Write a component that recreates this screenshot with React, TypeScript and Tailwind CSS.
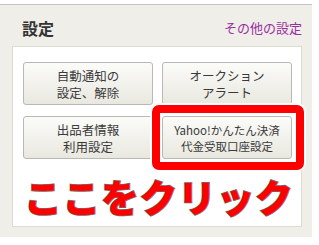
import React from "react";

const jp = { fontFamily: '"Noto Sans CJK JP", "Noto Sans", sans-serif' };

function Btn({ children, small }: { children: React.ReactNode; small?: boolean }) {
  return (
    <div
      className={`flex h-[43px] w-[130px] flex-col items-center justify-center rounded-[3px] border border-[#b9b9b3] bg-gradient-to-b from-[#fbfbf9] to-[#e9e8e0] text-[#3a3a3a] ${
        small ? "text-[11.5px] leading-[16px]" : "text-[12.5px] leading-[17px]"
      }`}
    >
      {children}
    </div>
  );
}

export default function App() {
  return (
    <div className="h-[245px] w-[319px] overflow-hidden bg-white pt-[4px]" style={jp}>
      <div className="h-px w-[312px] bg-[#c3c3c3]" />
      <div className="flex h-[232px] w-[312px] flex-col bg-[#efeee8]">
        <div className="flex h-[41px] items-start justify-between pl-[22px] pr-[10px] pt-[13px]">
          <span className="text-[16px] font-bold leading-[20px] text-[#333]">設定</span>
          <span className="pt-[1px] text-[13px] leading-[18px] text-[#9a2fa0]">その他の設定</span>
        </div>
        <div className="relative ml-[12px] flex h-[181px] w-[290px] flex-col border border-[#dedcd0] bg-white px-[10px] pt-[15px]">
          <div className="grid grid-cols-[130px_130px] gap-x-[9px] gap-y-[11px]">
            <Btn>
              <span>自動通知の</span>
              <span>設定、解除</span>
            </Btn>
            <Btn>
              <span>オークション</span>
              <span>アラート</span>
            </Btn>
            <Btn>
              <span>出品者情報</span>
              <span>利用設定</span>
            </Btn>
            <div className="relative">
              <Btn small>
                <span>Yahoo!かんたん決済</span>
                <span>代金受取口座設定</span>
              </Btn>
              <div className="pointer-events-none absolute bottom-[-11px] left-[-10px] right-[-12px] top-[-11px] rounded-[7px] border-[8px] border-[#ff0000] shadow-[0_0_0_2px_#ffffff]" />
            </div>
          </div>
          <div className="mt-[15px] whitespace-nowrap pl-[1px] text-[38px] font-black leading-[44px] tracking-[0.5px] text-[#ff0000] [-webkit-text-stroke:1.5px_#6b6b6b] [paint-order:stroke_fill]">
            ここをクリック
          </div>
        </div>
      </div>
    </div>
  );
}
